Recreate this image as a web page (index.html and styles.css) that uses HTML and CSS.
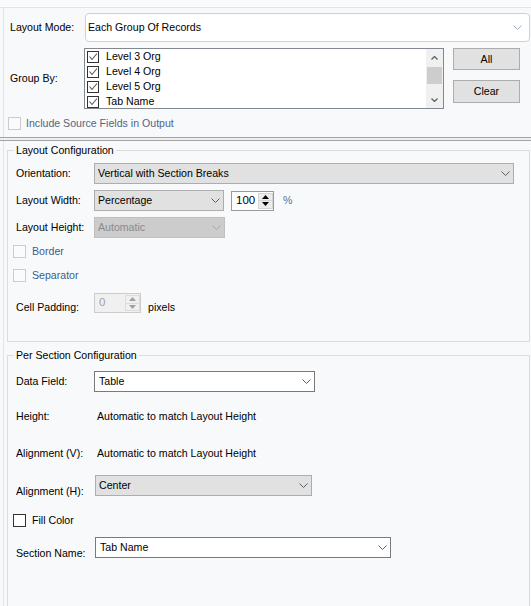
FILE: index.html
```html
<!DOCTYPE html>
<html>
<head>
<meta charset="utf-8">
<link rel="stylesheet" href="styles.css">
</head>
<body>
<div class="topband"></div>
<div class="panel top-panel">
  <div class="row mode-row">
    <span class="lbl lbl-mode">Layout Mode:</span>
    <div class="combo combo-mode">
      <span>Each Group Of Records</span>
      <svg class="chev" width="9" height="5" viewBox="0 0 9 5"><polyline points="0.5,0.5 4.5,4.5 8.5,0.5"/></svg>
    </div>
  </div>
  <div class="row group-row">
    <span class="lbl lbl-group">Group By:</span>
    <div class="listbox">
      <div class="items">
        <div class="item"><span class="lcb"><svg width="10" height="10" viewBox="0 0 10 10"><polyline points="1.5,4.5 4,7.5 9,1.5"/></svg></span>Level 3 Org</div>
        <div class="item"><span class="lcb"><svg width="10" height="10" viewBox="0 0 10 10"><polyline points="1.5,4.5 4,7.5 9,1.5"/></svg></span>Level 4 Org</div>
        <div class="item"><span class="lcb"><svg width="10" height="10" viewBox="0 0 10 10"><polyline points="1.5,4.5 4,7.5 9,1.5"/></svg></span>Level 5 Org</div>
        <div class="item"><span class="lcb"><svg width="10" height="10" viewBox="0 0 10 10"><polyline points="1.5,4.5 4,7.5 9,1.5"/></svg></span>Tab Name</div>
      </div>
      <div class="vscroll">
        <div class="sb-btn"><svg width="7" height="4" viewBox="0 0 7 4"><polyline points="0.5,3.5 3.5,0.5 6.5,3.5"/></svg></div>
        <div class="thumb"></div>
        <div class="sb-space"></div>
        <div class="sb-btn"><svg width="7" height="4" viewBox="0 0 7 4"><polyline points="0.5,0.5 3.5,3.5 6.5,0.5"/></svg></div>
      </div>
    </div>
    <div class="btns">
      <button class="btn">All</button>
      <button class="btn btn-clear">Clear</button>
    </div>
  </div>
  <div class="crow include-row"><span class="cb cb-light"></span><span class="include-txt">Include Source Fields in Output</span></div>
</div>
<div class="dbl"></div>
<div class="panel bottom-panel">
  <fieldset class="group layout-group">
    <legend>Layout Configuration</legend>
    <div class="frow r-orient">
      <span class="flbl">Orientation:</span>
      <div class="combo w-orient"><span>Vertical with Section Breaks</span><svg class="chev" width="9" height="5" viewBox="0 0 9 5"><polyline points="0.5,0.5 4.5,4.5 8.5,0.5"/></svg></div>
    </div>
    <div class="frow r-next">
      <span class="flbl">Layout Width:</span>
      <div class="combo w-width"><span>Percentage</span><svg class="chev" width="9" height="5" viewBox="0 0 9 5"><polyline points="0.5,0.5 4.5,4.5 8.5,0.5"/></svg></div>
      <div class="num num-width">
        <span class="num-val">100</span>
        <div class="spin">
          <div class="spin-b"><svg width="7" height="4" viewBox="0 0 7 4"><polygon points="0,4 3.5,0 7,4"/></svg></div>
          <div class="spin-b"><svg width="7" height="4" viewBox="0 0 7 4"><polygon points="0,0 3.5,4 7,0"/></svg></div>
        </div>
      </div>
      <span class="pct">%</span>
    </div>
    <div class="frow r-next">
      <span class="flbl">Layout Height:</span>
      <div class="combo combo-dis w-height"><span>Automatic</span><svg class="chev" width="9" height="5" viewBox="0 0 9 5"><polyline points="0.5,0.5 4.5,4.5 8.5,0.5"/></svg></div>
    </div>
    <div class="crow r-border"><span class="cb cb-light"></span><span class="blue-txt">Border</span></div>
    <div class="crow r-sep"><span class="cb cb-light"></span><span class="blue-txt">Separator</span></div>
    <div class="frow r-pad">
      <span class="flbl low">Cell Padding:</span>
      <div class="num num-dis">
        <span class="num-val">0</span>
        <div class="spin">
          <div class="spin-b"><svg width="7" height="4" viewBox="0 0 7 4"><polygon points="0,4 3.5,0 7,4"/></svg></div>
          <div class="spin-b"><svg width="7" height="4" viewBox="0 0 7 4"><polygon points="0,0 3.5,4 7,0"/></svg></div>
        </div>
      </div>
      <span class="pixels low">pixels</span>
    </div>
  </fieldset>
  <fieldset class="group section-group">
    <legend>Per Section Configuration</legend>
    <div class="frow r-data">
      <span class="flbl">Data Field:</span>
      <div class="combo combo-white w-data"><span>Table</span><svg class="chev" width="9" height="5" viewBox="0 0 9 5"><polyline points="0.5,0.5 4.5,4.5 8.5,0.5"/></svg></div>
    </div>
    <div class="frow trow r-h">
      <span class="flbl">Height:</span>
      <span class="val">Automatic to match Layout Height</span>
    </div>
    <div class="frow trow r-v">
      <span class="flbl">Alignment (V):</span>
      <span class="val">Automatic to match Layout Height</span>
    </div>
    <div class="frow r-ah">
      <span class="flbl low2">Alignment (H):</span>
      <div class="combo w-align"><span>Center</span><svg class="chev" width="9" height="5" viewBox="0 0 9 5"><polyline points="0.5,0.5 4.5,4.5 8.5,0.5"/></svg></div>
    </div>
    <div class="crow r-fill"><span class="cb"></span><span>Fill Color</span></div>
    <div class="frow r-sname">
      <span class="flbl low2">Section Name:</span>
      <div class="combo combo-white w-sname"><span>Tab Name</span><svg class="chev" width="9" height="5" viewBox="0 0 9 5"><polyline points="0.5,0.5 4.5,4.5 8.5,0.5"/></svg></div>
    </div>
  </fieldset>
</div>
</body>
</html>
```
FILE: styles.css
```css
* { box-sizing: border-box; }
html, body { margin: 0; padding: 0; }
body {
  width: 531px;
  height: 606px;
  overflow: hidden;
  background: #f8f9fb;
  font-family: "Liberation Sans", Arial, sans-serif;
  font-size: 10.6px;
  line-height: 13px;
  color: #000;
}
.topband {
  height: 8px;
  background: #fafbfd;
  border-bottom: 1px solid #dfe5ee;
}
.panel {
  margin-left: 3px;
  border-left: 1px solid #dfe5ee;
}
.top-panel {
  height: 129px;
  padding-top: 5px;
}
.row { display: flex; align-items: center; }
.mode-row { height: 29px; }
.lbl-mode { width: 81px; padding-left: 6px; flex: none; }

.combo {
  display: flex;
  align-items: center;
  justify-content: space-between;
  height: 21px;
  border: 1px solid #adadad;
  background: #e1e1e1;
  padding: 0 3px 0 3px;
  flex: none;
  white-space: nowrap;
}
.chev { flex: none; }
.chev polyline { fill: none; stroke: #606060; stroke-width: 1; }
.combo-mode {
  width: 445px;
  height: 29px;
  background: #fff;
  border-color: #c8d2df;
  border-radius: 4px;
  padding: 0 7px 0 2px;
}
.combo-mode .chev polyline { stroke: #9fadc0; }
.combo-white { background: #fff; border-color: #7a7a7a; padding-left: 4px; }
.combo-dis { background: #cccccc; border-color: #bfbfbf; color: #8a8a8a; }
.combo-dis .chev polyline { stroke: #a8a8a8; }

.group-row { margin-top: 6px; align-items: flex-start; }
.lbl-group { width: 80px; padding-left: 6px; align-self: center; flex: none; }
.listbox {
  width: 360px;
  height: 61px;
  border: 1px solid #828790;
  background: #fff;
  display: flex;
  flex: none;
}
.items { flex: 1; overflow: hidden; }
.item {
  height: 15px;
  display: flex;
  align-items: center;
  padding-left: 2px;
  white-space: nowrap;
}
.lcb {
  width: 12px;
  height: 12px;
  border: 1px solid #333;
  margin-right: 7px;
  display: flex;
  align-items: center;
  justify-content: center;
  flex: none;
}
.lcb polyline { fill: none; stroke: #555; stroke-width: 1.1; }
.vscroll {
  width: 17px;
  display: flex;
  flex-direction: column;
  background: #f0f0f0;
  flex: none;
}
.sb-btn {
  height: 17px;
  display: flex;
  align-items: center;
  justify-content: center;
}
.sb-btn polyline { fill: none; stroke: #606060; stroke-width: 1.3; }
.thumb { height: 17px; margin: 1px 1px 0; background: #cdcdcd; }
.sb-space { flex: 1; }
.btns { margin-left: 9px; display: flex; flex-direction: column; flex: none; }
.btn {
  width: 67px;
  height: 22px;
  border: 1px solid #adadad;
  background: #e1e1e1;
  font: inherit;
  color: #000;
  padding: 0;
}
.btn-clear { margin-top: 10px; height: 23px; }

.crow { display: flex; align-items: center; height: 13px; }
.cb {
  width: 13px;
  height: 13px;
  border: 1px solid #333;
  background: #fff;
  margin-right: 6px;
  flex: none;
}
.cb-light { border-color: #cccccc; background: #fbfbfb; }
.include-row { margin-top: 8px; margin-left: 4px; }
.include-row .cb { margin-right: 5px; }
.include-txt { color: #55647f; }
.blue-txt { color: #3e5d8c; }

.dbl {
  height: 4px;
  border-top: 1px solid #a3a3a3;
  border-bottom: 1px solid #a3a3a3;
  background: #f0f0f0;
}
.bottom-panel { height: 465px; overflow: hidden; }

.group {
  margin: 3px 0 0 3px;
  width: 523px;
  border: 1px solid #dcdcdc;
  padding: 0;
  min-width: 0;
}
.group legend {
  margin-left: 6px;
  padding: 0 2px;
  line-height: 13px;
}
.layout-group { height: 198px; }
.section-group { margin-top: 7px; height: 262px; }

.frow { display: flex; align-items: center; }
.flbl { width: 86px; padding-left: 8px; flex: none; white-space: nowrap; }
.low { position: relative; top: 4px; }
.low2 { position: relative; top: 6px; }

.r-orient { margin-top: 6px; }
.r-next { margin-top: 6px; }
.w-orient { width: 420px; }
.w-width { width: 130px; }
.w-height { width: 131px; }

.num {
  display: flex;
  height: 20px;
  border: 1px solid #9a9a9a;
  background: #fff;
  flex: none;
}
.num-width { width: 43px; margin-left: 7px; }
.num-val { flex: 1; padding-left: 4px; line-height: 16px; font-size: 11.5px; }
.spin {
  width: 15px;
  display: flex;
  flex-direction: column;
  margin: 1px 0;
  border: 1px solid #d4d4d4;
  background: #ececec;
}
.spin-b {
  flex: 1;
  display: flex;
  align-items: center;
  justify-content: center;
}
.spin-b + .spin-b { border-top: 1px solid #d4d4d4; }
.spin-b polygon { fill: #000; }
.pct { margin-left: 9px; color: #5a6f96; }

.num-dis { width: 47px; background: #f0f0f0; border-color: #cccccc; color: #a0a0a0; }
.num-dis .spin { background: #f0f0f0; border-color: #dcdcdc; }
.num-dis .spin-b polygon { fill: #a0a0a0; }
.num-dis .spin-b + .spin-b { border-top-color: #dcdcdc; }
.pixels { margin-left: 7px; }

.r-border { margin-top: 7px; padding-left: 5px; }
.r-sep { margin-top: 11px; padding-left: 5px; }
.r-pad { margin-top: 11px; }

.r-data { margin-top: 9px; }
.w-data { width: 221px; }
.trow { height: 13px; }
.r-h { margin-top: 18px; }
.r-v { margin-top: 24px; }
.val { margin-left: 3px; }
.r-ah { margin-top: 15px; }
.w-align { width: 217px; margin-left: 1px; }
.r-fill { margin-top: 18px; padding-left: 5px; }
.r-sname { margin-top: 10px; }
.w-sname { width: 296px; margin-left: 1px; }
```
